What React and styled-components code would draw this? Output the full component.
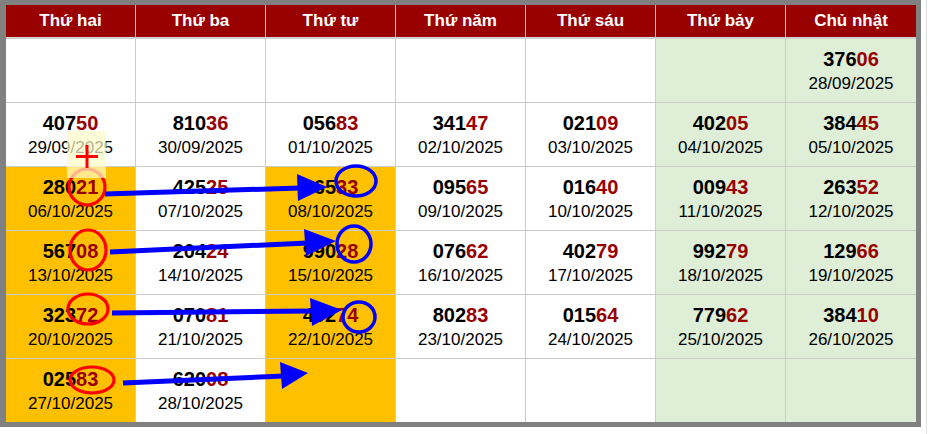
import React from "react";
import styled, { createGlobalStyle } from "styled-components";

const GlobalStyle = createGlobalStyle`
  html, body {
    margin: 0;
    padding: 0;
    background: #ffffff;
    font-family: "Liberation Sans", Arial, sans-serif;
  }
`;

const days = ["Thứ hai", "Thứ ba", "Thứ tư", "Thứ năm", "Thứ sáu", "Thứ bảy", "Chủ nhật"];

// each row = one week, null = empty cell
const weeks = [
  [null, null, null, null, null, null, ["37606", "28/09/2025"]],
  [
    ["40750", "29/09/2025"],
    ["81036", "30/09/2025"],
    ["05683", "01/10/2025"],
    ["34147", "02/10/2025"],
    ["02109", "03/10/2025"],
    ["40205", "04/10/2025"],
    ["38445", "05/10/2025"],
  ],
  [
    ["28021", "06/10/2025"],
    ["42525", "07/10/2025"],
    ["06533", "08/10/2025"],
    ["09565", "09/10/2025"],
    ["01640", "10/10/2025"],
    ["00943", "11/10/2025"],
    ["26352", "12/10/2025"],
  ],
  [
    ["56708", "13/10/2025"],
    ["20424", "14/10/2025"],
    ["99028", "15/10/2025"],
    ["07662", "16/10/2025"],
    ["40279", "17/10/2025"],
    ["99279", "18/10/2025"],
    ["12966", "19/10/2025"],
  ],
  [
    ["32372", "20/10/2025"],
    ["07081", "21/10/2025"],
    ["40274", "22/10/2025"],
    ["80283", "23/10/2025"],
    ["01564", "24/10/2025"],
    ["77962", "25/10/2025"],
    ["38410", "26/10/2025"],
  ],
  [["02583", "27/10/2025"], ["62008", "28/10/2025"], null, null, null, null, null],
];

const cellTone = (row, col) => {
  if ((col === 0 || col === 2) && row >= 2) return "orange";
  if (col >= 5) return "green";
  return "white";
};

const tones = {
  white: "#ffffff",
  orange: "#ffc000",
  green: "#deeed7",
};

const Page = styled.div`
  position: relative;
  width: 930px;
  height: 434px;
  display: flex;
  align-items: flex-start;
`;

const Frame = styled.div`
  border: 5px solid #808080;
  border-left-width: 6px;
  background: #cccccc;
`;

const Grid = styled.div`
  display: grid;
  grid-template-columns: repeat(6, 129px) 130px;
  grid-template-rows: 33px repeat(6, 63px);
  gap: 1px;
`;

const Head = styled.div`
  background: #990000;
  border-bottom: 1px solid #d4d4d4;
  color: #ffffff;
  font-weight: bold;
  font-size: 17px;
  display: flex;
  align-items: center;
  justify-content: center;
`;

const Cell = styled.div`
  background: ${(p) => tones[p.$tone]};
  display: flex;
  flex-direction: column;
  align-items: center;
  justify-content: center;
  gap: 3px;
`;

const Num = styled.div`
  font-size: 20px;
  line-height: 24px;
  font-weight: bold;
  color: #000000;

  span {
    color: #990000;
  }
`;

const DateText = styled.div`
  font-size: 17px;
  line-height: 20px;
  color: #000000;
`;

const Rule = styled.div`
  width: 1px;
  height: 434px;
  margin-left: 5px;
  background: #e2e2e2;
`;

const Marks = styled.svg`
  position: absolute;
  left: 0;
  top: 0;
  pointer-events: none;
`;

const arrows = [
  { from: [105, 194], to: [300, 188], head: "297,174 298,201 327,187" },
  { from: [110, 252], to: [308, 243], head: "304,229 306,256 336,241" },
  { from: [112, 313], to: [314, 311], head: "310,298 312,326 342,310" },
  { from: [123, 383], to: [284, 376], head: "280,362 282,389 308,373" },
];

const redRings = [
  [87, 187, 18, 18],
  [88, 250, 18, 20],
  [88, 309, 20, 15],
  [92, 380, 22, 13],
];

const blueRings = [
  [356, 181, 20, 15],
  [354, 244, 17, 18],
  [359, 317, 16, 15],
];

const App = () => {
  return (
    <Page>
      <GlobalStyle />
      <Frame>
        <Grid>
          {days.map((d) => (
            <Head key={d}>{d}</Head>
          ))}
          {weeks.map((week, r) =>
            week.map((c, i) => (
              <Cell key={r + "-" + i} $tone={cellTone(r, i)}>
                {c && (
                  <>
                    <Num>
                      {c[0].slice(0, 3)}
                      <span>{c[0].slice(3)}</span>
                    </Num>
                    <DateText>{c[1]}</DateText>
                  </>
                )}
              </Cell>
            ))
          )}
        </Grid>
      </Frame>
      <Rule />

      <Marks width="930" height="434" viewBox="0 0 930 434">
        {redRings.map(([cx, cy, rx, ry], i) => (
          <ellipse key={"r" + i} cx={cx} cy={cy} rx={rx} ry={ry} fill="none" stroke="#ff0000" strokeWidth="3.2" />
        ))}
        {blueRings.map(([cx, cy, rx, ry], i) => (
          <ellipse key={"b" + i} cx={cx} cy={cy} rx={rx} ry={ry} fill="none" stroke="#0000ff" strokeWidth="3.5" />
        ))}
        {arrows.map((a, i) => (
          <g key={"a" + i}>
            <line x1={a.from[0]} y1={a.from[1]} x2={a.to[0]} y2={a.to[1]} stroke="#0000ff" strokeWidth="5" />
            <polygon points={a.head} fill="#0000ff" />
          </g>
        ))}
        {/* pale highlight + cross */}
        <rect x="67" y="131" width="39" height="47" fill="rgba(255,251,200,0.7)" />
        <rect x="76" y="155" width="22" height="3" fill="#ff0000" />
        <rect x="85.5" y="145" width="3" height="23" fill="#ff0000" />
      </Marks>
    </Page>
  );
};

export default App;
